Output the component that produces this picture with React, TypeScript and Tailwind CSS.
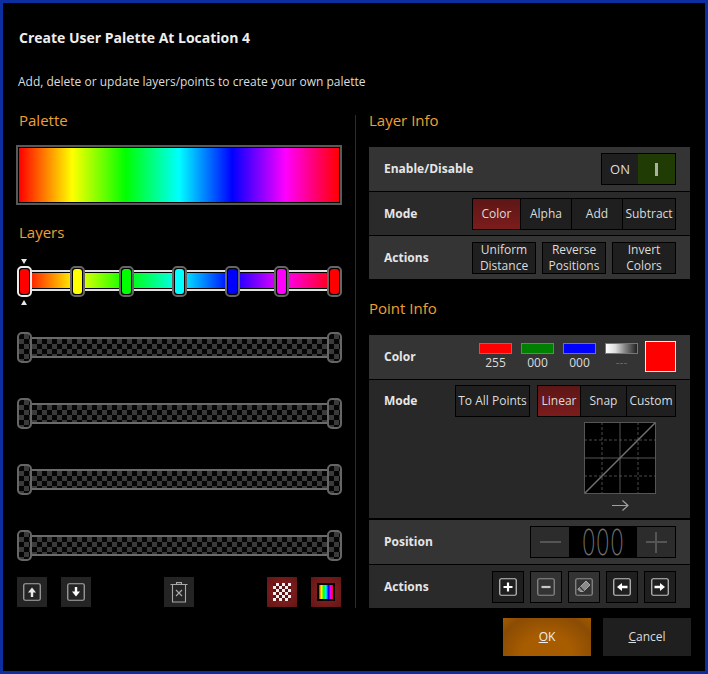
import type { ReactNode } from "react";

const checker =
  "bg-[conic-gradient(#3a3a3a_25%,#050505_0_50%,#3a3a3a_0_75%,#050505_0)] bg-[length:10px_10px]";

const rainbow =
  "bg-[linear-gradient(90deg,#f00,#ff0_16.6%,#0f0_33.3%,#0ff_50%,#00f_66.6%,#f0f_83.3%,#f00)]";

const handles = [
  { left: "left-0", fill: "bg-[#ff0000]" },
  { left: "left-[53px]", fill: "bg-[#ffff00]" },
  { left: "left-[102px]", fill: "bg-[#00ff00]" },
  { left: "left-[155px]", fill: "bg-[#00ffff]" },
  { left: "left-[208px]", fill: "bg-[#0000ff]" },
  { left: "left-[257px]", fill: "bg-[#ff00ff]" },
  { left: "left-[310px]", fill: "bg-[#ff0000]" },
];

function Heading({ children }: { children: ReactNode }) {
  return <h3 className="h-5 text-[15px] leading-5 text-[#f0a030]">{children}</h3>;
}

function ColorLayer() {
  return (
    <div className="relative h-[31px] w-[325px]">
      <div className="absolute left-[7px] right-[7px] top-1 h-[21px] border-y-2 border-[#e2e2e2] bg-black">
        <div className={`h-[15px] mt-[1px] ${rainbow}`} />
      </div>
      {handles.map((h, i) => (
        <div
          key={i}
          className={`absolute top-0 h-[31px] w-[15px] rounded-[5px] border-2 p-px bg-black ${h.left} ${
            i === 0 ? "border-[#ececec]" : "border-[#666666]"
          }`}
        >
          <div className={`h-full w-full rounded-[3px] ${h.fill}`} />
        </div>
      ))}
      <svg className="absolute left-[3px] -top-[7px]" width="9" height="5" viewBox="0 0 9 5">
        <path d="M1 0h6L4 5z" fill="#e6e6e6" />
      </svg>
      <svg className="absolute left-[3px] top-[34px]" width="9" height="5" viewBox="0 0 9 5">
        <path d="M1 5h6L4 0z" fill="#e6e6e6" />
      </svg>
    </div>
  );
}

function EmptyHandle() {
  return <div className={`h-[31px] w-[15px] shrink-0 rounded-[5px] border-2 border-[#666666] ${checker}`} />;
}

function EmptyLayer() {
  return (
    <div className="flex h-[31px] w-[325px] items-center">
      <EmptyHandle />
      <div className={`h-[21px] flex-1 border-y-2 border-[#6a6a6a] ${checker}`} />
      <EmptyHandle />
    </div>
  );
}

function IconFrame({ children, stroke = "#a8a8a8" }: { children?: ReactNode; stroke?: string }) {
  return (
    <svg width="18" height="18" viewBox="0 0 18 18" fill="none">
      <rect x="0.75" y="0.75" width="16.5" height="16.5" rx="1.5" stroke={stroke} strokeWidth="1.2" />
      {children}
    </svg>
  );
}

function ToolButton({ children, active }: { children: ReactNode; active?: boolean }) {
  return (
    <div
      className={`flex h-[30px] w-[30px] items-center justify-center ${
        active ? "bg-[radial-gradient(circle,#7c1c1c_45%,#611616)]" : "bg-[#242424]"
      }`}
    >
      {children}
    </div>
  );
}

function Toolbar() {
  return (
    <div className="mt-4 ml-px flex w-[324px] justify-between">
      <div className="flex gap-[14px]">
        <ToolButton>
          <IconFrame>
            <path d="M9 4.5 13 9.5H10.2V14H7.8V9.5H5z" fill="#e8e8e8" />
          </IconFrame>
        </ToolButton>
        <ToolButton>
          <IconFrame>
            <path d="M9 13.5 13 8.5H10.2V4H7.8V8.5H5z" fill="#ffffff" />
          </IconFrame>
        </ToolButton>
      </div>
      <ToolButton>
        <svg width="18" height="21" viewBox="0 0 18 21" fill="none" stroke="#a8a8a8" strokeWidth="1.1">
          <path d="M0.5 2.5h17M2.5 2.5V20h13V2.5M6.5 2.5V.6h5v1.9" />
          <path d="M6 8l6 6M12 8l-6 6" strokeWidth="1.2" />
        </svg>
      </ToolButton>
      <div className="flex gap-[14px]">
        <ToolButton active>
          <div className="h-[18px] w-[18px] bg-[conic-gradient(#f0f0f0_25%,#5e1414_0_50%,#f0f0f0_0_75%,#5e1414_0)] bg-[length:6px_6px]" />
        </ToolButton>
        <ToolButton active>
          <div className={`h-[18px] w-[18px] border-2 border-black ${rainbow}`} />
        </ToolButton>
      </div>
    </div>
  );
}

function InfoRow({
  label,
  children,
  tone = "bg-[#343434]",
  className = "h-[44px]",
}: {
  label: string;
  children: ReactNode;
  tone?: string;
  className?: string;
}) {
  return (
    <div className={`flex items-center justify-between pl-[15px] pr-[14px] ${tone} ${className}`}>
      <span className="text-[12px] font-bold text-[#e6e6e6]">{label}</span>
      {children}
    </div>
  );
}

function Cell({
  children,
  className = "",
  active,
}: {
  children: ReactNode;
  className?: string;
  active?: boolean;
}) {
  return (
    <div
      className={`flex h-[30px] items-center justify-center text-center text-[12px] leading-4 text-[#dcdcdc] ${
        active ? "bg-[linear-gradient(#5d1616,#7c1c1c)]" : "bg-[#1f1f1f]"
      } ${className}`}
    >
      {children}
    </div>
  );
}

function Segments({ children }: { children: ReactNode }) {
  return <div className="flex gap-px border border-black bg-black">{children}</div>;
}

function Swatch({ fill, value }: { fill: string; value: string }) {
  return (
    <div className="flex w-[33px] flex-col items-center">
      <div className={`h-[11px] w-[33px] border border-[#777777] ${fill}`} />
      <span className={`mt-px text-[12px] leading-4 ${value === "---" ? "text-[#666666]" : "text-[#dcdcdc]"}`}>
        {value}
      </span>
    </div>
  );
}

function CurveEditor() {
  return (
    <div className="mt-[5px] mr-[34px] flex flex-col items-center self-end">
      <svg width="72" height="72" viewBox="0 0 72 72" className="bg-black" fill="none">
        <path d="M18 0v72M54 0v72M0 18h72M0 54h72" stroke="#4a4a4a" strokeDasharray="3 2" />
        <path d="M36 0v72M0 36h72" stroke="#555555" />
        <rect x="0.5" y="0.5" width="71" height="71" stroke="#555555" />
        <path d="M1 71 71 1" stroke="#6e6e6e" strokeWidth="1.6" />
      </svg>
      <svg className="mt-[6px]" width="17" height="11" viewBox="0 0 17 11" fill="none" stroke="#a0a0a0" strokeWidth="1.2">
        <path d="M0 5.5h16M10.5 .5l5.5 5-5.5 5" />
      </svg>
    </div>
  );
}

function ActionButton({ children, light }: { children: ReactNode; light?: boolean }) {
  return (
    <div
      className={`flex h-[32px] w-[32px] items-center justify-center border border-black ${
        light ? "bg-[#333333]" : "bg-[#1f1f1f]"
      }`}
    >
      {children}
    </div>
  );
}

function LayerInfo() {
  return (
    <div className="mt-[17px] flex flex-col gap-px bg-black">
      <InfoRow label="Enable/Disable">
        <div className="flex border border-black bg-black">
          <Cell className="w-[36px] text-[13px]">ON</Cell>
          <div className="flex h-[30px] w-[37px] items-center justify-center bg-[#203c04]">
            <div className="h-[13px] w-[2.5px] bg-[#a9b3a0]" />
          </div>
        </div>
      </InfoRow>
      <InfoRow label="Mode" tone="bg-[#2a2a2a]" className="h-[43px]">
        <Segments>
          <Cell active className="w-[47px]">Color</Cell>
          <Cell className="w-[50px]">Alpha</Cell>
          <Cell className="w-[50px]">Add</Cell>
          <Cell className="w-[52px]">Subtract</Cell>
        </Segments>
      </InfoRow>
      <InfoRow label="Actions" className="h-[43px]">
        <div className="flex gap-[6px]">
          <Cell className="h-[32px] w-[64px] border border-black">Uniform Distance</Cell>
          <Cell className="h-[32px] w-[64px] border border-black">Reverse Positions</Cell>
          <Cell className="h-[32px] w-[64px] border border-black">Invert Colors</Cell>
        </div>
      </InfoRow>
    </div>
  );
}

function PointInfo() {
  return (
    <div className="mt-[17px] flex flex-col gap-px bg-black">
      <InfoRow label="Color">
        <div className="flex items-start gap-[9px]">
          <Swatch fill="bg-[#ff0000]" value="255" />
          <Swatch fill="bg-[#008000]" value="000" />
          <Swatch fill="bg-[#0000ff]" value="000" />
          <Swatch
            fill="bg-[linear-gradient(90deg,#fff,#ddd_30%,#888_60%,#222)]"
            value="---"
          />
          <div className="-mt-[2px] h-[31px] w-[31px] -ml-[2px] border border-[#eeeeee] bg-[#ff0000]" />
        </div>
      </InfoRow>
      <div className="flex h-[138px] flex-col bg-[#282828] pb-[2px]">
        <div className="mt-[5px] flex items-center justify-between pl-[15px] pr-[14px]">
          <span className="text-[12px] font-bold text-[#e6e6e6]">Mode</span>
          <div className="flex gap-[7px]">
            <Cell className="h-[32px] w-[75px] border border-black">To All Points</Cell>
            <Segments>
              <Cell active className="w-[42px]">Linear</Cell>
              <Cell className="w-[45px]">Snap</Cell>
              <Cell className="w-[48px]">Custom</Cell>
            </Segments>
          </div>
        </div>
        <CurveEditor />
      </div>
      <InfoRow label="Position" className="mt-px h-[44px]">
        <div className="flex h-[32px] w-[146px] border border-black bg-black">
          <div className="flex w-[38px] items-center justify-center bg-[#2c2c2c]">
            <div className="h-[1.5px] w-[21px] bg-[#555555]" />
          </div>
          <div className="flex flex-1 items-center justify-center overflow-hidden">
            <span className="scale-x-[.62] font-['Inter',sans-serif] text-[36px] font-extralight leading-none tracking-[1px] text-[#707070]">
              000
            </span>
          </div>
          <div className="relative flex w-[38px] items-center justify-center bg-[#2c2c2c]">
            <div className="h-[1.5px] w-[21px] bg-[#555555]" />
            <div className="absolute h-[21px] w-[1.5px] bg-[#555555]" />
          </div>
        </div>
      </InfoRow>
      <InfoRow label="Actions" tone="bg-[#2a2a2a]" className="h-[43px]">
        <div className="flex gap-[6px]">
          <ActionButton>
            <IconFrame stroke="#c4c4c4">
              <path d="M9 4.5v9M4.5 9h9" stroke="#ffffff" strokeWidth="2.2" />
            </IconFrame>
          </ActionButton>
          <ActionButton light>
            <IconFrame stroke="#8e8e8e">
              <path d="M4.5 9h9" stroke="#c8c8c8" strokeWidth="2.2" />
            </IconFrame>
          </ActionButton>
          <ActionButton light>
            <IconFrame stroke="#8e8e8e">
              <path d="M11 3 15 7 8.5 13.5H5L2.8 11.2z" fill="#8a8a8a" stroke="#a8a8a8" />
              <path d="M5 9l4 4.2" stroke="#333333" strokeWidth="1.2" />
            </IconFrame>
          </ActionButton>
          <ActionButton>
            <IconFrame stroke="#c4c4c4">
              <path d="M4 9 9 5v2.8h5.5v2.4H9V13z" fill="#ffffff" />
            </IconFrame>
          </ActionButton>
          <ActionButton>
            <IconFrame stroke="#c4c4c4">
              <path d="M14 9 9 5v2.8H3.5v2.4H9V13z" fill="#ffffff" />
            </IconFrame>
          </ActionButton>
        </div>
      </InfoRow>
    </div>
  );
}

export default function App() {
  return (
    <div className="h-[674px] w-[708px] border-[3px] border-[#0b2fa0] bg-black font-['Open_Sans','Noto_Sans',sans-serif] text-[#e6e6e6]">
      <h1 className="pl-4 pt-[25px] text-[14px] font-bold leading-5 text-[#eeeeee]">
        Create User Palette At Location 4
      </h1>
      <p className="mt-[26px] pl-[15px] text-[12px] leading-4 text-[#dddddd]">
        Add, delete or update layers/points to create your own palette
      </p>

      <div className="mt-5 flex pl-[13px]">
        <div className="w-[326px]">
          <div className="pl-[3px]">
            <Heading>Palette</Heading>
          </div>
          <div className="mt-[15px] h-[60px] border-2 border-[#595959] bg-black p-px">
            <div className={`h-full w-full ${rainbow}`} />
          </div>
          <div className="mt-[17px] pl-[3px]">
            <Heading>Layers</Heading>
          </div>
          <div className="mt-6 ml-px flex flex-col gap-[35px]">
            <ColorLayer />
            <EmptyLayer />
            <EmptyLayer />
            <EmptyLayer />
            <EmptyLayer />
          </div>
          <Toolbar />
        </div>

        <div className="ml-[13px] mt-[5px] w-px bg-[#2b2b2b]" />

        <div className="ml-[13px] w-[321px]">
          <Heading>Layer Info</Heading>
          <LayerInfo />
          <div className="mt-[19px]">
            <Heading>Point Info</Heading>
          </div>
          <PointInfo />
        </div>
      </div>

      <div className="mt-[10px] flex justify-end gap-3 pr-[14px]">
        <div className="flex h-[38px] w-[88px] items-center justify-center bg-[radial-gradient(ellipse_at_50%_100%,#a85c00_40%,#8a4c04_80%,#a35a00_100%)] text-[12px] text-[#eeeeee]">
          <span><u>O</u>K</span>
        </div>
        <div className="flex h-[38px] w-[88px] items-center justify-center bg-[#1f1f1f] text-[12px] text-[#dddddd]">
          <span><u>C</u>ancel</span>
        </div>
      </div>
    </div>
  );
}
